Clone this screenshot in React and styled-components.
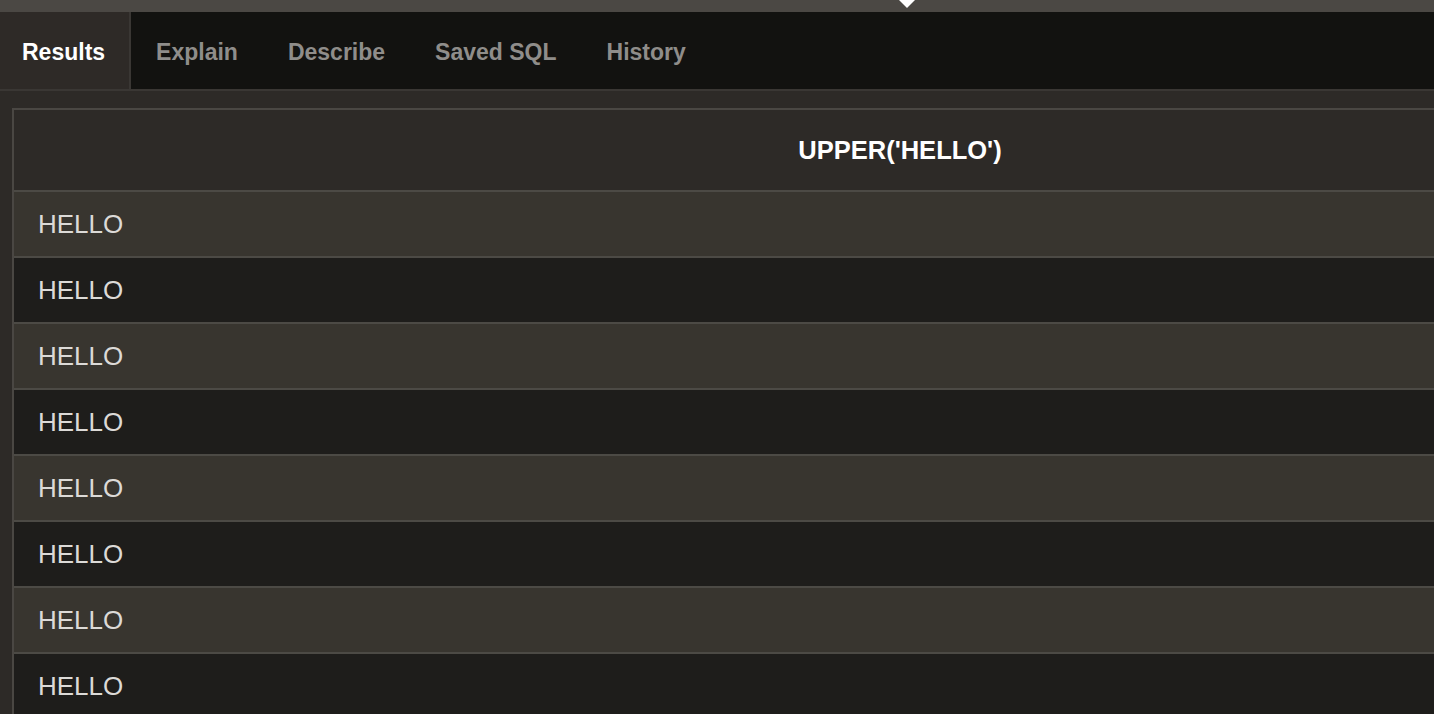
import React from 'react'
import styled, { createGlobalStyle } from 'styled-components'

const Global = createGlobalStyle`
  html, body {
    margin: 0;
    padding: 0;
    background: #2d2a27;
    overflow: hidden;
  }
  body {
    font-family: "Liberation Sans", Arial, sans-serif;
  }
`

const Page = styled.div`
  width: 1434px;
  height: 714px;
  overflow: hidden;
  display: flex;
  flex-direction: column;
  background: #2d2a27;
`

const TopBar = styled.div`
  position: relative;
  height: 12px;
  flex-shrink: 0;
  background: #4b4844;
`

// little white notch pointing down into the tab strip
const Notch = styled.span`
  position: absolute;
  top: 0;
  left: 899px;
  width: 0;
  height: 0;
  border-left: 8px solid transparent;
  border-right: 8px solid transparent;
  border-top: 8px solid #ffffff;
`

const TabBar = styled.div`
  display: flex;
  height: 77px;
  flex-shrink: 0;
  background: #121210;
  border-bottom: 2px solid #3a3734;
`

const Tab = styled.div`
  display: flex;
  align-items: center;
  padding: 4px 24px 0 22px;
  font-size: 23px;
  font-weight: 700;
  color: ${p => (p.$active ? '#ffffff' : '#8f8d8a')};
  background: ${p => (p.$active ? '#2e2a27' : 'transparent')};
  border-right: 2px solid ${p => (p.$active ? '#3a3734' : 'transparent')};
  margin-right: ${p => (p.$active ? '0' : '2px')};

  &:nth-child(2) {
    padding-left: 25px;
  }
`

const Body = styled.div`
  flex: 1;
  padding: 17px 0 0 12px;
  overflow: hidden;
`

const Table = styled.div`
  width: 1772px;
  border-left: 2px solid #4a4743;
  border-top: 2px solid #4a4743;
`

const HeaderCell = styled.div`
  height: 80px;
  display: flex;
  align-items: center;
  justify-content: center;
  background: #2d2a27;
  color: #ffffff;
  font-size: 25.5px;
  font-weight: 700;
  border-bottom: 2px solid #4c4a45;
`

const Row = styled.div`
  height: 64px;
  display: flex;
  align-items: center;
  padding-left: 24px;
  background: ${p => (p.$odd ? '#38352f' : '#1e1d1b')};
  border-bottom: 2px solid #4c4a45;
  color: #dcdad7;
  font-size: 26px;
`

const tabs = ['Results', 'Explain', 'Describe', 'Saved SQL', 'History']
const rows = Array.from({ length: 8 }, () => 'HELLO')

export default function App() {
  return (
    <Page>
      <Global />
      <TopBar>
        <Notch />
      </TopBar>
      <TabBar>
        {tabs.map((t, i) => (
          <Tab key={t} $active={i === 0}>
            {t}
          </Tab>
        ))}
      </TabBar>
      <Body>
        <Table>
          <HeaderCell>UPPER('HELLO')</HeaderCell>
          {rows.map((r, i) => (
            <Row key={i} $odd={i % 2 === 0}>
              {r}
            </Row>
          ))}
        </Table>
      </Body>
    </Page>
  )
}
